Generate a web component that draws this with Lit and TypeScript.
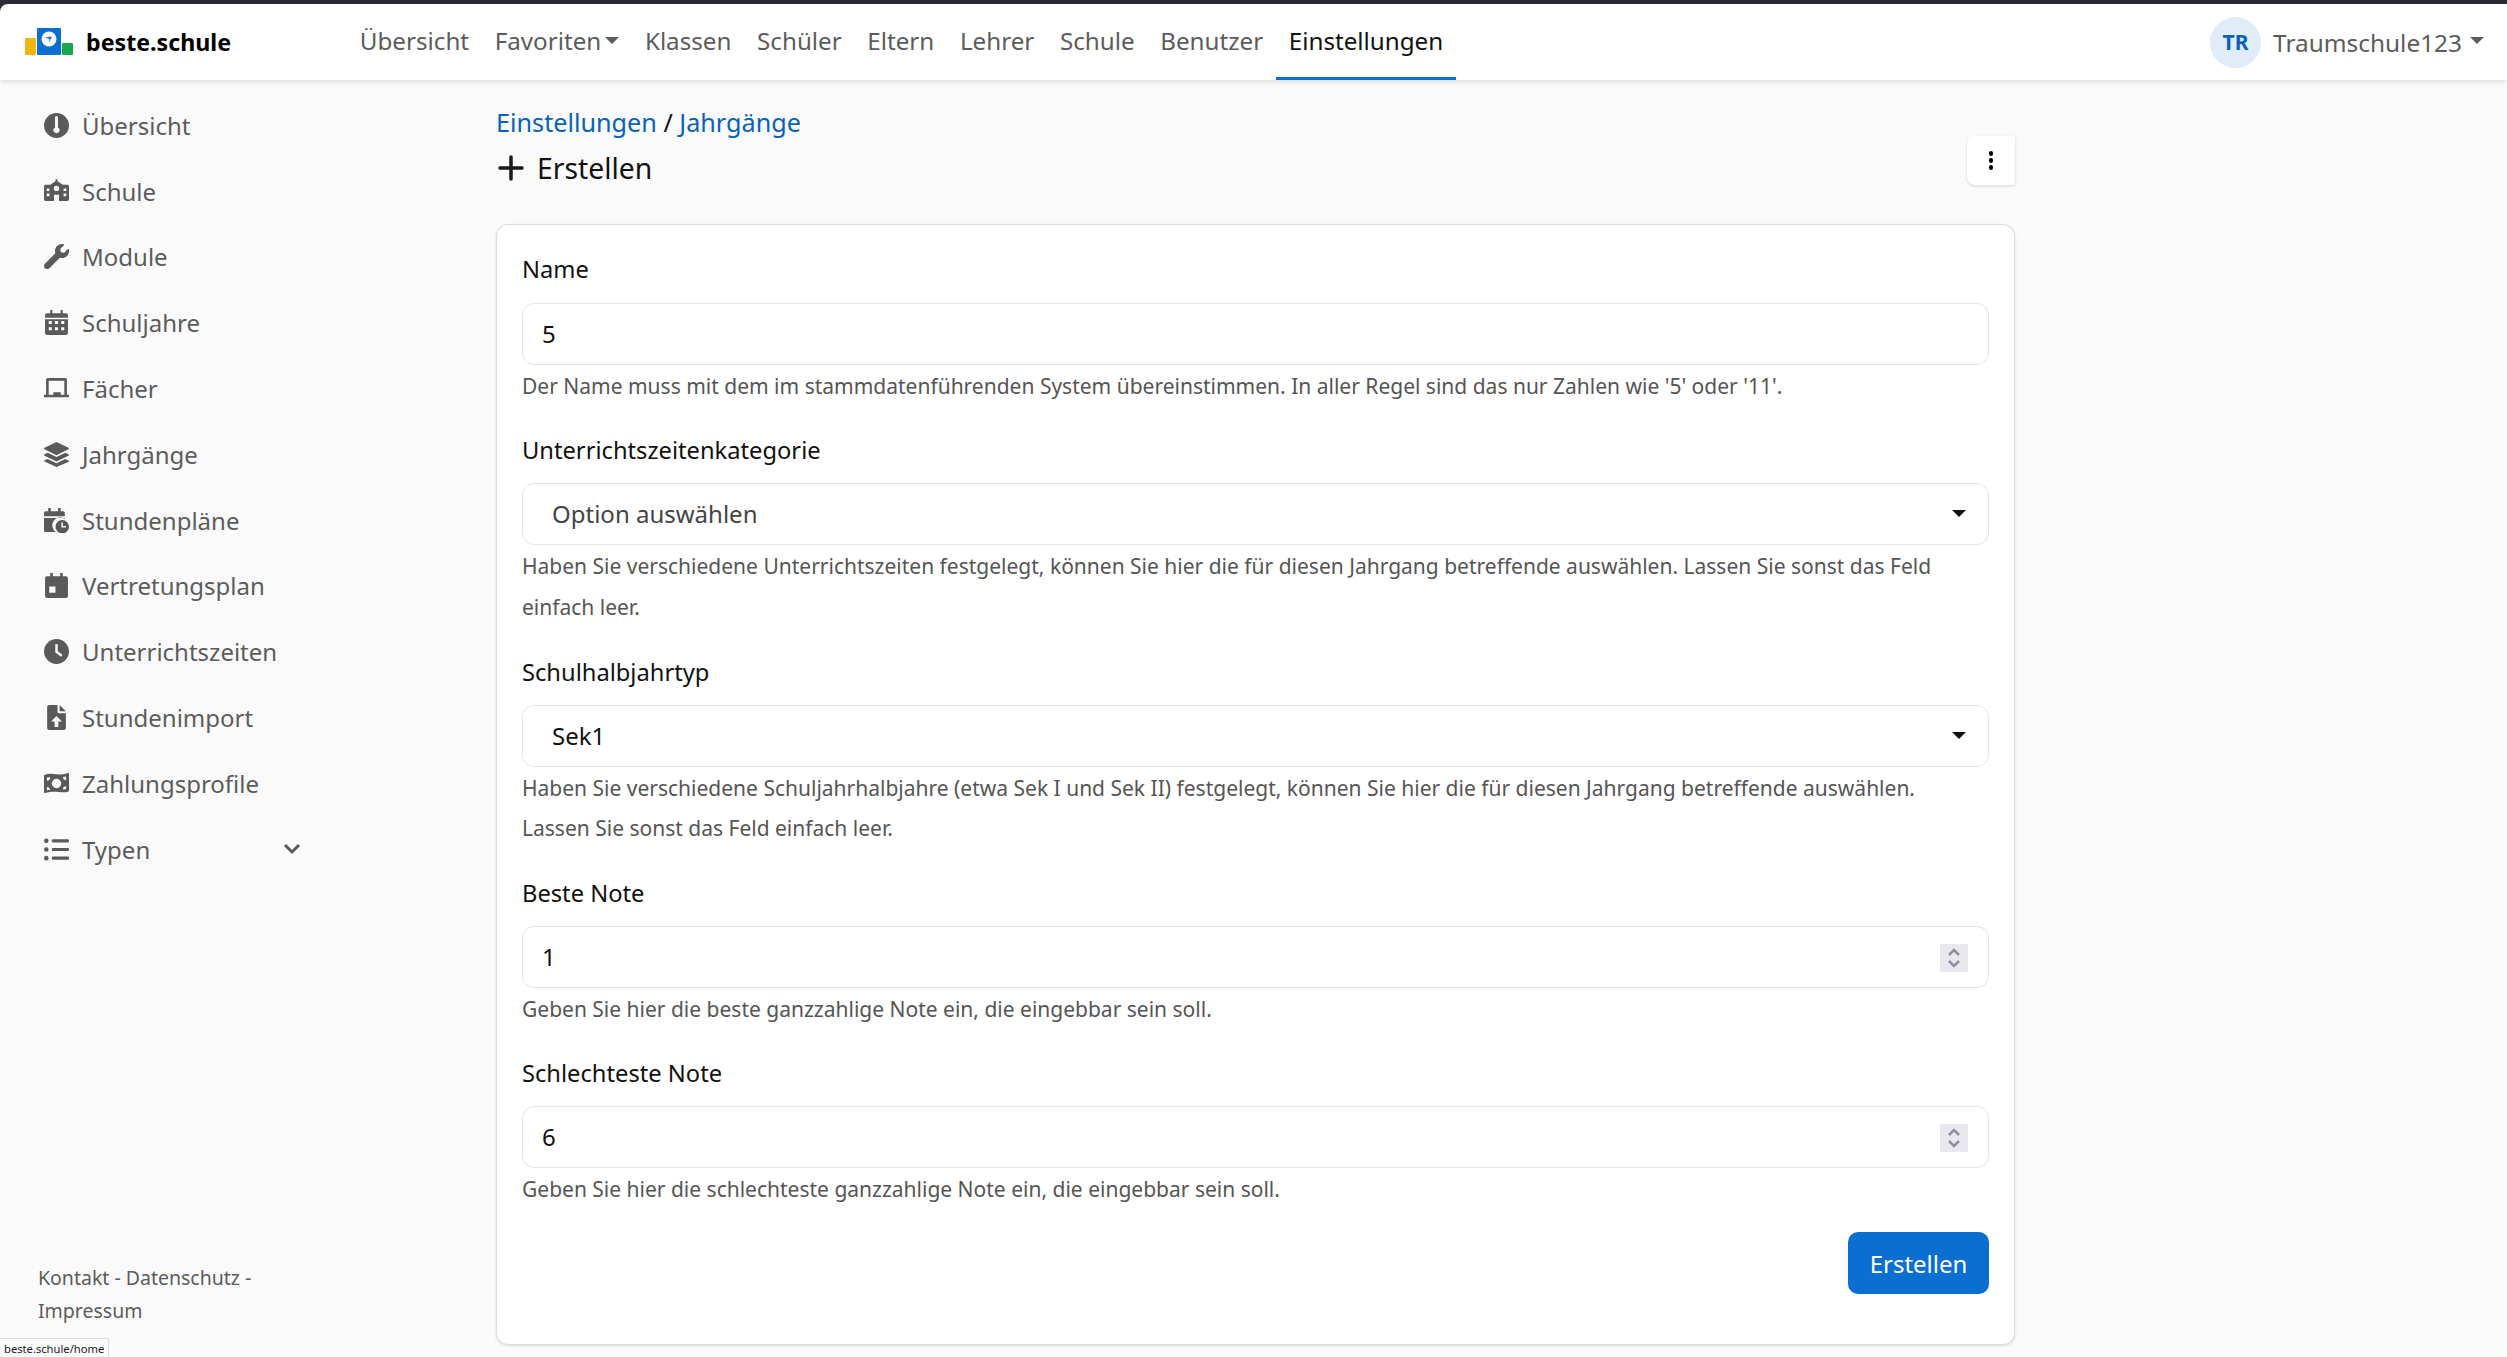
import { LitElement, html, svg, css } from 'lit';
import { customElement } from 'lit/decorators.js';

const icons: Record<string, unknown> = {
  gauge: svg`<path fill-rule="evenodd" d="M12 0a12 12 0 1 1 0 24a12 12 0 0 1 0-24zM10.600 4.200v9.600a3 3 0 1 0 2.800 0V4.200a1.400 1.400 0 0 0-2.800 0z"/>`,
  school: svg`<path fill-rule="evenodd" d="M12 0l1 .6v1.600l5 3.200h4.400A1.600 1.600 0 0 1 24 7v12.400a1.600 1.600 0 0 1-1.600 1.600H1.600A1.600 1.600 0 0 1 0 19.400V7a1.600 1.600 0 0 1 1.600-1.600H6l5-3.200V.6zM12 6.400a2.600 2.600 0 1 0 0 5.200a2.600 2.600 0 0 0 0-5.200zM2.600 9v2.600h2.600V9zM2.600 14v2.600h2.600V14zM18.800 9v2.600h2.600V9zM18.800 14v2.600h2.600V14zM9.600 15v6h4.800v-6z"/>`,
  wrench: svg`<g transform="scale(.047)"><path d="M507.730 109.100c-2.240-9.030-13.540-12.090-20.120-5.510l-74.360 74.360-67.880-11.310-11.310-67.880 74.360-74.360c6.620-6.620 3.430-17.900-5.660-20.160-47.380-11.740-99.550.91-136.580 37.930-39.640 39.640-50.550 97.100-34.050 147.200L18.740 402.760c-24.990 24.990-24.990 65.510 0 90.500 24.990 24.990 65.510 24.990 90.500 0l213.210-213.210c50.120 16.710 107.470 5.680 147.370-34.220 37.070-37.070 49.700-89.320 37.910-136.730z"/></g>`,
  calendar: svg`<path fill-rule="evenodd" d="M6 0h2v3h8V0h2v3h3a2 2 0 0 1 2 2v17a2 2 0 0 1-2 2H3a2 2 0 0 1-2-2V5a2 2 0 0 1 2-2h3zM1 7.500v1.300h22V7.500zM4.500 10.500v3h3v-3zM10.500 10.500v3h3v-3zM16.500 10.500v3h3v-3zM4.500 16.500v3h3v-3zM10.500 16.500v3h3v-3zM16.500 16.500v3h3v-3z"/>`,
  board: svg`<path fill-rule="evenodd" d="M3.500 2h17A1.500 1.500 0 0 1 22 3.500V18h2v2.500H0V18h2V3.500A1.500 1.500 0 0 1 3.500 2zM4.500 4.500V18h4.500v-2.500h7V18h3.500V4.500z"/>`,
  layers: svg`<path d="M12 0l11.500 5.600a.8.8 0 0 1 0 1.400L12 12.600.5 7a.8.8 0 0 1 0-1.400z"/><path d="M3.600 10.200L12 14.300l8.400-4.100 3.100 1.500a.8.8 0 0 1 0 1.400L12 18.700.5 13.100a.8.8 0 0 1 0-1.400z"/><path d="M3.600 16.300L12 20.400l8.400-4.100 3.100 1.500a.8.8 0 0 1 0 1.400L12 24 .5 18.800a.8.8 0 0 1 0-1.400z"/>`,
  calendarClock: svg`<path d="M4 0h2.500v3h7V0H16v3h2.500A1.500 1.500 0 0 1 20 4.500V8H0V4.500A1.500 1.500 0 0 1 1.500 3H4z"/><path d="M0 9.500h20v1a7.500 7.500 0 0 0-8.800 12.500H1.500A1.500 1.500 0 0 1 0 21.500z"/><path fill-rule="evenodd" d="M17.500 11.500a6.500 6.500 0 1 1 0 13a6.500 6.500 0 0 1 0-13zM16.700 14v4.800h4.300v-1.500h-2.800V14z"/>`,
  calendarDay: svg`<path fill-rule="evenodd" d="M6 0h2.500v3h7V0H18v3h3a2 2 0 0 1 2 2v17a2 2 0 0 1-2 2H3a2 2 0 0 1-2-2V5a2 2 0 0 1 2-2h3zM5 13v6h6v-6z"/>`,
  clock: svg`<path fill-rule="evenodd" d="M12 0a12 12 0 1 1 0 24a12 12 0 0 1 0-24zM10.800 5v8l5.600 4 1.400-1.900-4.600-3.300V5z"/>`,
  fileUp: svg`<path fill-rule="evenodd" d="M5 0h8v6.500a1.500 1.500 0 0 0 1.500 1.500H21v14a2 2 0 0 1-2 2H5a2 2 0 0 1-2-2V2a2 2 0 0 1 2-2zM15 0l6 6h-6zM12 10.500l-5.200 5.300h3.400V21h3.600v-5.200h3.400z"/>`,
  money: svg`<path fill-rule="evenodd" d="M1 3.600C7 1 12 5.600 23 2a1 1 0 0 1 1 .8v16.600c-7 3-12-1.500-23 1.800a1 1 0 0 1-1-.8V4.600a1 1 0 0 1 1-1zM12 7.500a4.500 4.500 0 1 0 0 9a4.500 4.500 0 0 0 0-9zM2.800 6.300v3a3 3 0 0 0 3-3.200zM21.200 5.300l-3 .5a3 3 0 0 0 3 3zM2.800 15.300v3.200l3-.4a3 3 0 0 0-3-2.800zM21.200 14.700a3 3 0 0 0-3 3l3-.4z"/>`,
  list: svg`<circle cx="2.200" cy="3.700" r="2.200"/><circle cx="2.200" cy="12" r="2.200"/><circle cx="2.200" cy="20.300" r="2.200"/><rect x="7.500" y="2.200" width="16.500" height="3" rx="1"/><rect x="7.500" y="10.500" width="16.500" height="3" rx="1"/><rect x="7.500" y="18.800" width="16.500" height="3" rx="1"/>`,
};

const sideItems = [
  ['gauge', 'Übersicht'],
  ['school', 'Schule'],
  ['wrench', 'Module'],
  ['calendar', 'Schuljahre'],
  ['board', 'Fächer'],
  ['layers', 'Jahrgänge'],
  ['calendarClock', 'Stundenpläne'],
  ['calendarDay', 'Vertretungsplan'],
  ['clock', 'Unterrichtszeiten'],
  ['fileUp', 'Stundenimport'],
  ['money', 'Zahlungsprofile'],
];

const navItems = ['Klassen', 'Schüler', 'Eltern', 'Lehrer', 'Schule', 'Benutzer'];

@customElement('app-root')
export class AppRoot extends LitElement {
  static styles = css`
    :host {
      display: flex;
      flex-direction: column;
      height: 100vh;
      overflow: hidden;
      background: #fafafa;
      color: #111;
      font-family: 'Noto Sans', 'Open Sans', sans-serif;
      font-size: 24px;
    }

    /* top bar */
    .top {
      background: #2a2a35;
      padding-top: 4px;
      position: relative;
      z-index: 2;
      box-shadow: 0 2px 5px rgba(0, 0, 0, 0.12);
    }
    .navbar {
      display: flex;
      align-items: center;
      height: 76px;
      background: #fff;
      border-top-left-radius: 8px;
      padding-left: 25px;
    }
    .logo {
      width: 48px;
      height: 28px;
      margin-right: 13px;
    }
    .brand {
      width: 261px;
      font-weight: 700;
      font-size: 23.200px;
      color: #000;
    }
    .nav {
      display: flex;
      height: 100%;
      flex: 1;
      font-size: 24.200px;
    }
    .nav a {
      display: flex;
      align-items: center;
      gap: 4px;
      padding: 0 12.800px;
      color: #5c5c5c;
      border-bottom: 3px solid transparent;
    }
    .nav a.active {
      color: #111;
      border-bottom-color: #0a6fd1;
    }
    .caret {
      width: 0;
      height: 0;
      border-left: 7px solid transparent;
      border-right: 7px solid transparent;
      border-top: 7px solid currentColor;
    }
    .user {
      display: flex;
      align-items: center;
      color: #5c5c5c;
      font-size: 24.400px;
      padding-right: 23px;
    }
    .avatar {
      width: 51px;
      height: 51px;
      border-radius: 50%;
      background: #e1ecf9;
      color: #0a62b8;
      font-weight: 700;
      font-size: 21px;
      display: flex;
      align-items: center;
      justify-content: center;
      margin-right: 12px;
    }
    .user .caret {
      margin-left: 8px;
      margin-bottom: 4px;
    }

    /* sidebar */
    .body {
      display: flex;
      flex: 1;
      min-height: 0;
    }
    .side {
      width: 470px;
      flex: none;
      display: flex;
      flex-direction: column;
      padding-top: 12.500px;
      color: #5c5c5c;
      box-sizing: border-box;
    }
    .side-item {
      display: flex;
      align-items: center;
      height: 65.800px;
      padding-left: 44px;
    }
    .side-item svg {
      width: 25px;
      height: 25px;
      fill: #5a5a5a;
      margin-right: 13px;
      flex: none;
    }
    .side-item .chev {
      width: 18px;
      height: 18px;
      margin: 0 0 0 auto;
      fill: none;
      stroke: #5a5a5a;
      stroke-width: 3;
      position: relative;
      left: -169px;
    }
    .foot {
      margin-top: auto;
      width: 280px;
      padding: 0 0 30px 38px;
      font-size: 19.500px;
      line-height: 33px;
    }
    .status {
      position: absolute;
      left: 0;
      bottom: 0;
      height: 18px;
      padding: 0 4px;
      background: #fafafa;
      border: 1px solid #ddd;
      border-width: 1px 1px 0 0;
      font-size: 11.200px;
      line-height: 19px;
      color: #222;
      z-index: 3;
    }

    /* main */
    .main {
      width: 1519px;
      flex: none;
      padding: 24px 0 0 26px;
    }
    .head {
      display: flex;
      justify-content: space-between;
      height: 120px;
    }
    .crumb {
      height: 36px;
      line-height: 36px;
      font-size: 25.200px;
    }
    .crumb a {
      color: #0a62b8;
    }
    .title {
      display: flex;
      align-items: center;
      gap: 13px;
      height: 55px;
      font-size: 28.300px;
    }
    .title svg {
      width: 26px;
      height: 26px;
      stroke: #1a1a1a;
      stroke-width: 3.500;
      stroke-linecap: round;
      margin-left: 2px;
    }
    .more {
      width: 48px;
      height: 49px;
      margin-top: 32px;
      background: #fff;
      border-radius: 8px 0 0 8px;
      box-shadow: 0 1px 3px rgba(0, 0, 0, 0.16);
      display: flex;
      flex-direction: column;
      align-items: center;
      justify-content: center;
      gap: 2.500px;
    }
    .more i {
      width: 4.500px;
      height: 4.500px;
      border-radius: 50%;
      background: #000;
    }
    .card {
      background: #fff;
      border: 1px solid #dcdcdc;
      border-radius: 12px;
      box-shadow: 0 1px 3px rgba(0, 0, 0, 0.12);
      padding: 25px 25px 49px;
      height: 1121px;
      box-sizing: border-box;
    }
    .label {
      height: 40px;
      line-height: 38px;
      font-size: 23.700px;
      color: #111;
      margin-bottom: 12px;
    }
    .label:first-child {
      margin-bottom: 13px;
    }
    .field {
      display: flex;
      align-items: center;
      height: 62px;
      border: 1px solid #e4e4e4;
      border-radius: 12px;
      padding: 0 20px 1.500px 19px;
      box-sizing: border-box;
      background: #fff;
    }
    .field input {
      flex: 1;
      border: none;
      outline: none;
      padding: 0;
      background: none;
      font: inherit;
      color: #111;
    }
    .field.select {
      padding-left: 29px;
      padding-right: 22px;
      color: #444;
      justify-content: space-between;
    }
    .field.select.filled {
      color: #111;
    }
    .field .caret {
      color: #111;
    }
    .spin {
      width: 28px;
      height: 28px;
      margin-top: 3px;
      background: #e8e8ee;
      display: flex;
      align-items: center;
      justify-content: center;
    }
    .spin svg {
      width: 14px;
      height: 20px;
      fill: none;
      stroke: #8f8fa3;
      stroke-width: 2.500;
    }
    .help {
      margin-top: 1px;
      margin-bottom: 26px;
      padding-right: 16px;
      font-size: 21px;
      line-height: 40px;
      color: #555;
    }
    .help.short {
      margin-bottom: 25px;
    }
    .help.loose {
      line-height: 40.500px;
    }
    .actions {
      display: flex;
      justify-content: flex-end;
      margin-top: -3px;
    }
    .btn {
      width: 141px;
      height: 62px;
      border-radius: 10px;
      background: #0a6fd1;
      color: #fff;
      display: flex;
      align-items: center;
      justify-content: center;
    }
  `;

  private _spinner() {
    return html`<span class="spin">
      <svg viewBox="0 0 14 20"><path d="M2 7l5-5 5 5M2 13l5 5 5-5" /></svg>
    </span>`;
  }

  render() {
    return html`
      <div class="top">
        <div class="navbar">
          <svg class="logo" viewBox="0 0 48 28">
            <rect x="0" y="10" width="11" height="17" rx="1" fill="#ecb70a" />
            <rect x="12" y="0" width="24" height="27" rx="1" fill="#0a6fd1" />
            <rect x="37" y="15" width="11" height="12" rx="1" fill="#17a84f" />
            <circle cx="24" cy="11" r="7.500" fill="#fff" />
            <path d="M20 9.500l7-1-3 6 .5-3.500z" fill="#0a6fd1" />
          </svg>
          <span class="brand">beste.schule</span>
          <div class="nav">
            <a>Übersicht</a>
            <a>Favoriten<span class="caret"></span></a>
            ${navItems.map((n) => html`<a>${n}</a>`)}
            <a class="active">Einstellungen</a>
          </div>
          <div class="user">
            <span class="avatar">TR</span>
            Traumschule123
            <span class="caret"></span>
          </div>
        </div>
      </div>
      <div class="body">
        <aside class="side">
          ${sideItems.map(
            ([icon, label]) => html`<div class="side-item">
              <svg viewBox="0 0 24 24">${icons[icon]}</svg>${label}
            </div>`
          )}
          <div class="side-item">
            <svg viewBox="0 0 24 24">${icons.list}</svg>Typen
            <svg class="chev" viewBox="0 0 18 18"><path d="M2 5l7 7 7-7" /></svg>
          </div>
          <div class="foot">Kontakt - Datenschutz - Impressum</div>
        </aside>
        <main class="main">
          <div class="head">
            <div>
              <div class="crumb"><a>Einstellungen</a> / <a>Jahrgänge</a></div>
              <div class="title">
                <svg viewBox="0 0 26 26"><path d="M13 2v22M2 13h22" /></svg>
                Erstellen
              </div>
            </div>
            <div class="more"><i></i><i></i><i></i></div>
          </div>
          <div class="card">
            <div class="label">Name</div>
            <div class="field"><input .value=${'5'} /></div>
            <div class="help short">
              Der Name muss mit dem im stammdatenführenden System übereinstimmen. In aller Regel sind das nur Zahlen wie '5' oder '11'.
            </div>
            <div class="label">Unterrichtszeitenkategorie</div>
            <div class="field select">Option auswählen<span class="caret"></span></div>
            <div class="help loose">
              Haben Sie verschiedene Unterrichtszeiten festgelegt, können Sie hier die für diesen Jahrgang betreffende auswählen. Lassen Sie sonst das Feld einfach leer.
            </div>
            <div class="label">Schulhalbjahrtyp</div>
            <div class="field select filled">Sek1<span class="caret"></span></div>
            <div class="help">
              Haben Sie verschiedene Schuljahrhalbjahre (etwa Sek I und Sek II) festgelegt, können Sie hier die für diesen Jahrgang betreffende auswählen. Lassen Sie sonst das Feld einfach leer.
            </div>
            <div class="label">Beste Note</div>
            <div class="field"><input .value=${'1'} />${this._spinner()}</div>
            <div class="help short">Geben Sie hier die beste ganzzahlige Note ein, die eingebbar sein soll.</div>
            <div class="label">Schlechteste Note</div>
            <div class="field"><input .value=${'6'} />${this._spinner()}</div>
            <div class="help">Geben Sie hier die schlechteste ganzzahlige Note ein, die eingebbar sein soll.</div>
            <div class="actions"><div class="btn">Erstellen</div></div>
          </div>
        </main>
      </div>
      <div class="status">beste.schule/home</div>
    `;
  }
}
